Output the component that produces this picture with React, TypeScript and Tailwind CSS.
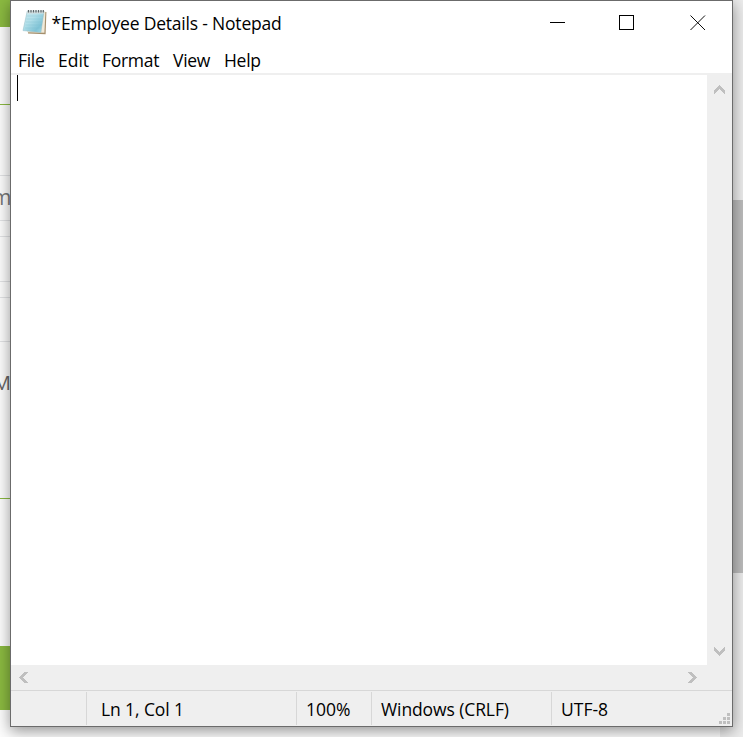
import React from "react";

const FONT = "font-['Open_Sans','Noto_Sans',sans-serif]";

function NotepadIcon() {
  return (
    <svg width="26" height="26" viewBox="0 0 26 26" className="block">
      <defs>
        <linearGradient id="paper" x1="0" y1="0" x2="1" y2="1">
          <stop offset="0" stopColor="#cfe9ef" />
          <stop offset="0.4" stopColor="#b2dfe9" />
          <stop offset="0.75" stopColor="#7fc3d6" />
          <stop offset="1" stopColor="#a9dde8" />
        </linearGradient>
      </defs>
      <path d="M7 3 L24.4 3 L23.6 25.2 L6 24.4 Z" fill="#a58f6c" />
      <path d="M6 2.5 L23.4 2.5 L22.4 23.8 L5 23.2 Z" fill="#f1ead9" />
      <path d="M5.2 2.2 L22 2.2 L18.9 23.4 L1 21.6 Z" fill="url(#paper)" stroke="#8fbac4" strokeWidth="0.5" />
      <path d="M4.8 7h16M4.4 10h15.6M4 13h15.6M3.5 16h15.6M3 19h15.6" stroke="#7dbfd0" strokeWidth="0.6" opacity="0.5" />
      <path d="M5.2 2.2 L22 2.2 L21.7 4.4 L4.9 4.4 Z" fill="#d5dfe0" />
      <path d="M6.5 1v2.5M9 1v2.5M11.5 1v2.5M14 1v2.5M16.5 1v2.5M19 1v2.5M21.3 1v2.5" stroke="#5d6568" strokeWidth="1.2" />
    </svg>
  );
}

function Arrow({ turn }: { turn: string }) {
  return (
    <svg width="11" height="9" viewBox="0 0 11 9" className={`block ${turn}`} shapeRendering="crispEdges">
      <path d="M0 5 L5.5 0 L11 5 L11 9 L5.5 4 L0 9 Z" fill="#bfbfbf" />
    </svg>
  );
}

function Page() {
  return (
    <div className="flex h-[737px] w-[743px] bg-[#fdfdfd]">
      <div className="flex w-[720px] flex-col">
        <div className="h-[27px] w-[289px] bg-[#8bba41]" />
        <div className="h-[77px]" />
        <div className="h-px bg-[#8bba41]" />
        <div className="h-[70px]" />
        <div className="h-px bg-[#e2e3e5]" />
        <div className="-ml-[8px] h-[44px] text-[21px] leading-[43px] text-[#777]">m</div>
        <div className="h-px bg-[#e2e3e5]" />
        <div className="h-[15px]" />
        <div className="h-px bg-[#e2e3e5]" />
        <div className="h-[44px]" />
        <div className="h-px bg-[#e2e3e5]" />
        <div className="h-[15px]" />
        <div className="h-px bg-[#e2e3e5]" />
        <div className="h-[43px]" />
        <div className="h-px bg-[#e2e3e5]" />
        <div className="-ml-[7px] h-[156px] pt-[28px] text-[20px] leading-[26px] text-[#666]">M</div>
        <div className="h-px bg-[#8bba41]" />
        <div className="h-[147px]" />
        <div className="h-[64px] bg-[#8bba41]" />
      </div>
      <div className="w-[23px] bg-[#ececec] pt-[200px]">
        <div className="h-[373px] bg-[#bcbcbc]" />
      </div>
    </div>
  );
}

function Status({ w, pad, children }: { w: string; pad: string; children?: React.ReactNode }) {
  return (
    <div className={`mt-px h-[33px] shrink-0 whitespace-pre border-r border-[#d7d7d7] text-[17.5px] leading-[35px] ${w} ${pad}`}>
      {children}
    </div>
  );
}

export default function App() {
  return (
    <div className={`relative h-[737px] w-[743px] overflow-hidden text-black ${FONT}`}>
      <Page />
      <div className="absolute left-[10px] top-0 flex h-[727px] w-[723px] flex-col border border-[#6b6b6b] bg-white shadow-[0_4px_14px_rgba(0,0,0,0.42)]">
        <div className="flex h-[45px] shrink-0">
          <div className="ml-[11px] mt-[8px] w-[29.5px]"><NotepadIcon /></div>
          <div className="mt-[9px] whitespace-pre text-[17.5px] leading-[26px] tracking-[-0.2px]">*Employee Details - Notepad</div>
          <svg className="ml-auto mr-[26px] mt-[13px] block shrink-0" width="156" height="17" viewBox="0 0 156 17" fill="none" stroke="#000">
            <path d="M0 8.5h15" shapeRendering="crispEdges" />
            <rect x="69.5" y="1.5" width="14" height="14" shapeRendering="crispEdges" />
            <path d="M140.5 1.5l14.5 14.5M155 1.5l-14.5 14.5" strokeWidth="0.95" />
          </svg>
        </div>
        <div className="flex h-[27px] shrink-0 gap-[14px] pl-[7px] text-[17.5px] leading-[28px] tracking-[-0.3px]">
          <span className="w-[26px] whitespace-pre">File</span>
          <span className="w-[30px] whitespace-pre tracking-normal">Edit</span>
          <span className="w-[57px] whitespace-pre">Format</span>
          <span className="w-[37px] whitespace-pre">View</span>
          <span className="w-[37px] whitespace-pre">Help</span>
        </div>
        <div className="h-[2px] shrink-0 bg-[#efefef]" />
        <div className="flex h-[590px] shrink-0">
          <div className="w-[696px] pl-[6px]">
            <div className="h-[26px] w-px bg-black" />
          </div>
          <div className="flex w-[25px] flex-col items-center justify-between bg-[#efefef] pb-[9px] pr-px pt-[10px]">
            <Arrow turn="" />
            <Arrow turn="rotate-180" />
          </div>
        </div>
        <div className="flex h-[25px] shrink-0 items-center justify-between bg-[#efefef] pl-[7px] pr-[34px]">
          <Arrow turn="-rotate-90" />
          <Arrow turn="rotate-90" />
        </div>
        <div className="flex h-[36px] shrink-0 border-t border-[#d7d7d7] bg-[#efefef]">
          <Status w="w-[76px]" pad="" />
          <Status w="w-[210px]" pad="pl-[14px] tracking-[-0.1px]">Ln 1, Col 1</Status>
          <Status w="w-[75px]" pad="pl-[9px]">100%</Status>
          <Status w="w-[180px]" pad="pl-[9px] tracking-[-0.1px]">Windows (CRLF)</Status>
          <div className="grow whitespace-pre pl-[9px] pt-px text-[17.5px] leading-[35px]">UTF-8</div>
          <svg className="mr-[2px] mt-[22px] block" width="11" height="11" viewBox="0 0 11 11" fill="#bfbfbf">
            <path d="M8 0h3v3H8zM4 4h3v3H4zM8 4h3v3H8zM0 8h3v3H0zM4 8h3v3H4zM8 8h3v3H8z" />
          </svg>
        </div>
      </div>
    </div>
  );
}
